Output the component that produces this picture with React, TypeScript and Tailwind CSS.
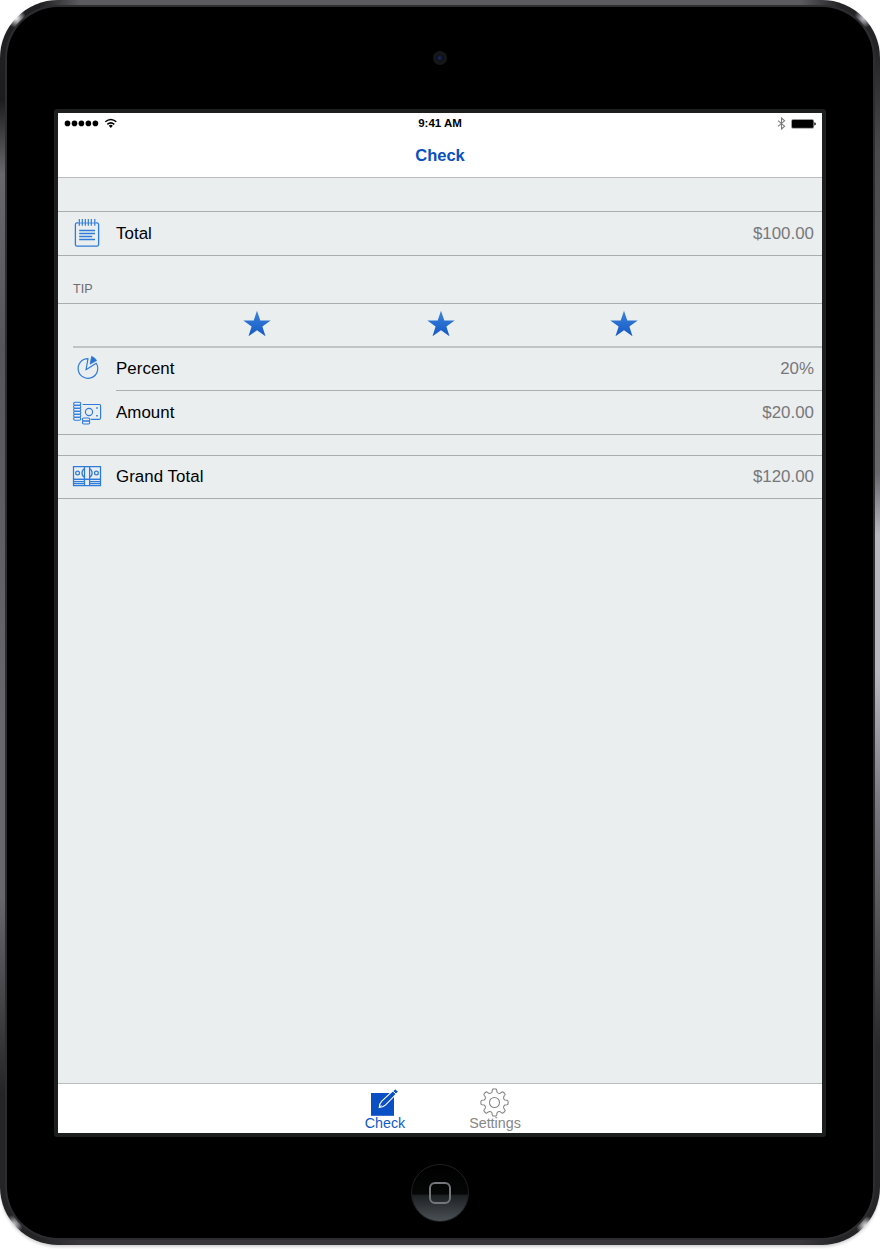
import type { ReactNode } from "react";

const BLUE = "#2f7bdc";

function NotepadIcon() {
  return (
    <svg width="30" height="32" viewBox="0 0 30 32" fill="none" stroke={BLUE} strokeWidth="1.3">
      <path d="M6 4.9H4.8A1.6 1.6 0 0 0 3.4 6.5V26.6A1.6 1.6 0 0 0 5 28.2H25A1.6 1.6 0 0 0 26.6 26.6V6.5A1.6 1.6 0 0 0 25.2 4.9H24" />
      <path d="M6 5H24" strokeWidth="0.8" />
      <path d="M7.3 1V7.8M10.3 1V7.8M13.3 1V7.8M16.3 1V7.8M19.3 1V7.8M22.8 1V7.8" strokeWidth="1.2" />
      <path d="M7.2 12.5H23M7.2 15.5H23M7.2 18.5H20.2M7.2 21.5H23" />
    </svg>
  );
}

function PieIcon() {
  return (
    <svg width="30" height="32" viewBox="0 0 30 32" fill="none" stroke={BLUE} strokeWidth="1.2" strokeLinejoin="round">
      <path d="M16 5.7A9.8 9.8 0 1 0 24.2 10.2L14 16.8Z" />
      <path d="M18 11.2L19.6 3.3Q23 4.6 24.7 7.6Z" fill="#2872d1" stroke="#2872d1" strokeWidth=".6" />
    </svg>
  );
}

function CoinsIcon() {
  return (
    <svg width="30" height="32" viewBox="0 0 30 32" fill="none" stroke={BLUE} strokeWidth="1.15">
      {[5.2, 8.2, 11.2, 14.2, 17.2, 20.2].map((y) => (
        <rect key={y} x="1.6" y={y} width="7.2" height="3" rx="1.5" />
      ))}
      <path d="M10.6 7.5H27.4Q28.6 7.5 28.6 8.9V20.8Q28.6 22.3 27.4 22.3H18.8" />
      <circle cx="17" cy="15" r="3.6" />
      <path d="M24.2 11H25.8M24.2 18.8H25.8" strokeWidth="1.6" />
      <rect x="10.4" y="21" width="7.4" height="3" rx="1.5" />
      <rect x="10.4" y="24" width="7.4" height="3" rx="1.5" />
    </svg>
  );
}

function BillsIcon() {
  return (
    <svg width="30" height="32" viewBox="0 0 30 32" fill="none" stroke={BLUE} strokeWidth="1.25">
      <path d="M1.5 5.5H28.5V24.5H1.5ZM12.5 5.5V24.5M17.6 5.5V24.5" />
      <path d="M1.5 18.3H28.5" strokeWidth="1.5" />
      <path d="M1.5 20.5H12.5M17.6 20.5H28.5M1.5 22.5H12.5M17.6 22.5H28.5" />
      <circle cx="5.6" cy="12" r="1.9" />
      <circle cx="24.4" cy="12" r="1.9" />
      <path d="M12.5 7.8Q10 9 10 12Q10 15 12.5 16.2M17.6 7.8Q20.1 9 20.1 12Q20.1 15 17.6 16.2" />
    </svg>
  );
}

function Star() {
  return (
    <svg width="28" height="28" viewBox="0 0 28 28">
      <defs>
        <linearGradient id="starFill" x1="0" y1="0" x2="0" y2="1">
          <stop offset="0" stopColor="#3b84da" />
          <stop offset="1" stopColor="#1558c6" />
        </linearGradient>
      </defs>
      <path fill="url(#starFill)" d="M14 .8L17.3 10.4H27.7L19.4 16.5L22.5 26.2L14 20.3L5.5 26.2L8.6 16.5L.3 10.4H10.7Z" />
    </svg>
  );
}

function ComposeIcon() {
  return (
    <svg width="30" height="30" viewBox="0 0 30 30">
      <rect x="1" y="5" width="23" height="22.8" fill="#0a4fc4" />
      <path d="M9.4 19.4Q9.3 15.7 11.8 13.2L25.2 .6L28.6 3.6L15.6 16.8Q13 19.4 9.4 19.4Z" fill="#0a4fc4" stroke="#fff" strokeWidth="1.1" />
      <path d="M22.6 2.9L26.2 6.2" stroke="#fff" strokeWidth="1" />
      <path d="M9.1 19.7L11.3 17.2" stroke="#fff" strokeWidth="1" />
    </svg>
  );
}

function GearIcon() {
  const teeth = [0, 45, 90, 135, 180, 225, 270, 315];
  const point = (radius: number, degrees: number) => {
    const a = ((degrees - 90) * Math.PI) / 180;
    return `${(14.5 + radius * Math.cos(a)).toFixed(2)} ${(14.5 + radius * Math.sin(a)).toFixed(2)}`;
  };
  const outline = teeth
    .map(
      (t, i) =>
        `${i === 0 ? "M" : "L"}${point(10.6, t - 14)}L${point(12.6, t - 10)}Q${point(13.8, t - 8)} ${point(13.6, t - 4)}L${point(13.6, t + 4)}Q${point(13.8, t + 8)} ${point(12.6, t + 10)}L${point(10.6, t + 14)}Q${point(9.5, t + 22.5)} ${point(10.6, t + 31)}`,
    )
    .join("");
  return (
    <svg width="30" height="30" viewBox="0 0 30 30" fill="none" stroke="#868686" strokeWidth="1.1">
      <path d={outline + "Z"} strokeLinejoin="round" />
      <circle cx="14.5" cy="14.5" r="5" />
    </svg>
  );
}

function StatusBar() {
  return (
    <div className="grid h-[21px] grid-cols-3 items-center px-[6px]">
      <div className="flex items-center pb-px">
        <svg width="54" height="12" viewBox="0 0 54 12">
          {[3.5, 10.5, 17.4, 24.4, 31.4].map((x) => (
            <circle key={x} cx={x} cy="6.4" r="2.8" />
          ))}
          <g fill="none" stroke="#000" strokeWidth="1.5">
            <path d="M41.3 4.8Q46.8 .1 52.3 4.8" />
            <path d="M43.3 7.3Q46.8 4.4 50.3 7.3" />
          </g>
          <path d="M44.8 8.7Q46.8 7 48.8 8.7L46.8 10.9Z" />
        </svg>
      </div>
      <span className="pt-px text-center text-[11.5px] leading-none font-bold">9:41 AM</span>
      <div className="flex items-center justify-end gap-[5px]">
        <svg width="9" height="13" viewBox="0 0 9 13" fill="none" stroke="#7c7c7c" strokeWidth="1.1">
          <path d="M1 3.6L7.6 9.2L4.5 12V1L7.6 3.8L1 9.4" />
        </svg>
        <svg width="25" height="10" viewBox="0 0 25 10">
          <rect x=".3" y=".3" width="22.6" height="9.2" rx="1.6" fill="#777" />
          <rect x="1" y="1" width="21.2" height="7.8" rx="1" />
          <path d="M23.3 3.2Q24.8 3.5 24.8 4.9Q24.8 6.3 23.3 6.6Z" />
        </svg>
      </div>
    </div>
  );
}

function Row({ icon, label, value }: { icon: ReactNode; label: string; value: string }) {
  return (
    <div className="flex h-full items-center pr-[8px] pl-[14px] text-[16.9px] leading-5">
      {icon}
      <span className="ml-[14px] tracking-[0.04px] text-black">{label}</span>
      <span className="ml-auto text-[#77787a]">{value}</span>
    </div>
  );
}

export default function App() {
  return (
    <div className="h-[1250px] w-[880px] overflow-hidden bg-white font-['Liberation_Sans',Arial,sans-serif]">
      <div className="h-[1245px] w-[880px] rounded-[58px] bg-[radial-gradient(circle_at_16px_18px,#e4e4ea_1px,transparent_10px),radial-gradient(circle_at_864px_18px,#b8b8c0_1px,transparent_10px),radial-gradient(circle_at_13px_1225px,#c4c4ca_1px,transparent_10px),radial-gradient(circle_at_866px_1226px,#d6d6dc_1px,transparent_10px),linear-gradient(90deg,transparent,#5c5b60_40px,#5c5b60_760px,transparent),linear-gradient(90deg,transparent,#39373c_40px,#39373c_760px,transparent),linear-gradient(#202022_4%,#1c1c1e_8%,#68676d_14%,#56555b_28%,#68676e_58%,#68676e_72%,#242427_88%,#242427_100%),linear-gradient(#242427_4%,#4a494e_12%,#5c5b60_30%,#68676c_38%,#b8b7bf_43%,#b8b7bf_54%,#77767c_65%,#5c5b60_72%,#29292b_84%,#242427_100%)] bg-[length:100%_100%,100%_100%,100%_100%,100%_100%,800px_7px,800px_7px,440px_100%,440px_100%] bg-[position:0_0,0_0,0_0,0_0,40px_0,40px_100%,0_0,100%_0] bg-no-repeat p-[5px] shadow-[0_2px_3px_rgba(0,0,0,0.18)]">
        <div className="h-full rounded-[53px] bg-[#2d2d30] p-[2px]">
          <div className="flex h-full flex-col items-center rounded-[51px] bg-black">
            <div className="flex h-[102px] shrink-0 items-center justify-center">
              <svg width="16" height="16" viewBox="0 0 16 16">
                <circle cx="8" cy="8" r="7" fill="#161719" />
                <circle cx="8" cy="8" r="4" fill="#10131c" />
                <circle cx="8" cy="8" r="2" fill="#122052" />
                <circle cx="7.3" cy="8" r=".8" fill="#20327e" />
              </svg>
            </div>
            <div className="h-[1028px] w-[772px] shrink-0 rounded-[3px] bg-[#1d1f1e] p-[4px]">
              <div className="flex h-full flex-col bg-[#eaeeef]">
                <header className="h-[65px] border-b border-[#b9bdbf] bg-white">
                  <StatusBar />
                  <h1 className="pt-[11px] text-center text-[16.5px] leading-5 font-bold text-[#0a50c0]">Check</h1>
                </header>
                <main className="flex-1 pt-[33px]">
                  <section className="h-[45px] border-y border-[#a9adaf]">
                    <Row icon={<NotepadIcon />} label="Total" value="$100.00" />
                  </section>
                  <h2 className="flex h-[47px] items-end pb-[6px] pl-[15px] text-[12.6px] leading-4 text-[#6c6d70]">TIP</h2>
                  <section className="border-y border-[#a9adaf]">
                    <div className="flex h-[42px] justify-between pt-[6px] pr-[184px] pl-[185px]">
                      <Star />
                      <Star />
                      <Star />
                    </div>
                    <div className="ml-[15px] h-[2px] bg-[#c0c4c5]" />
                    <div className="h-[42px]">
                      <Row icon={<PieIcon />} label="Percent" value="20%" />
                    </div>
                    <div className="ml-[58px] h-px bg-[#abafb1]" />
                    <div className="h-[43px]">
                      <Row icon={<CoinsIcon />} label="Amount" value="$20.00" />
                    </div>
                  </section>
                  <section className="mt-[20px] h-[44px] border-y border-[#a9adaf]">
                    <Row icon={<BillsIcon />} label="Grand Total" value="$120.00" />
                  </section>
                </main>
                <nav className="flex h-[50px] justify-center border-t border-[#b9bdbf] bg-white text-[14.3px] leading-4">
                  <div className="flex w-[110px] flex-col items-center pt-[4px] text-[#1259c8]">
                    <ComposeIcon />
                    <span className="-mt-[3px]">Check</span>
                  </div>
                  <div className="flex w-[110px] flex-col items-center pt-[4px] text-[#868686]">
                    <GearIcon />
                    <span className="-mt-[3px]">Settings</span>
                  </div>
                </nav>
              </div>
            </div>
            <div className="mt-[27px] flex h-[58px] w-[58px] shrink-0 items-center justify-center rounded-full border border-[#1d1f20] bg-[linear-gradient(#000_0%,#050606_52%,#1d2023_54%,#4a5054_100%)]">
              <div className="h-[22px] w-[22px] rounded-[6px] border-2 border-[#73777a]" />
            </div>
          </div>
        </div>
      </div>
    </div>
  );
}
